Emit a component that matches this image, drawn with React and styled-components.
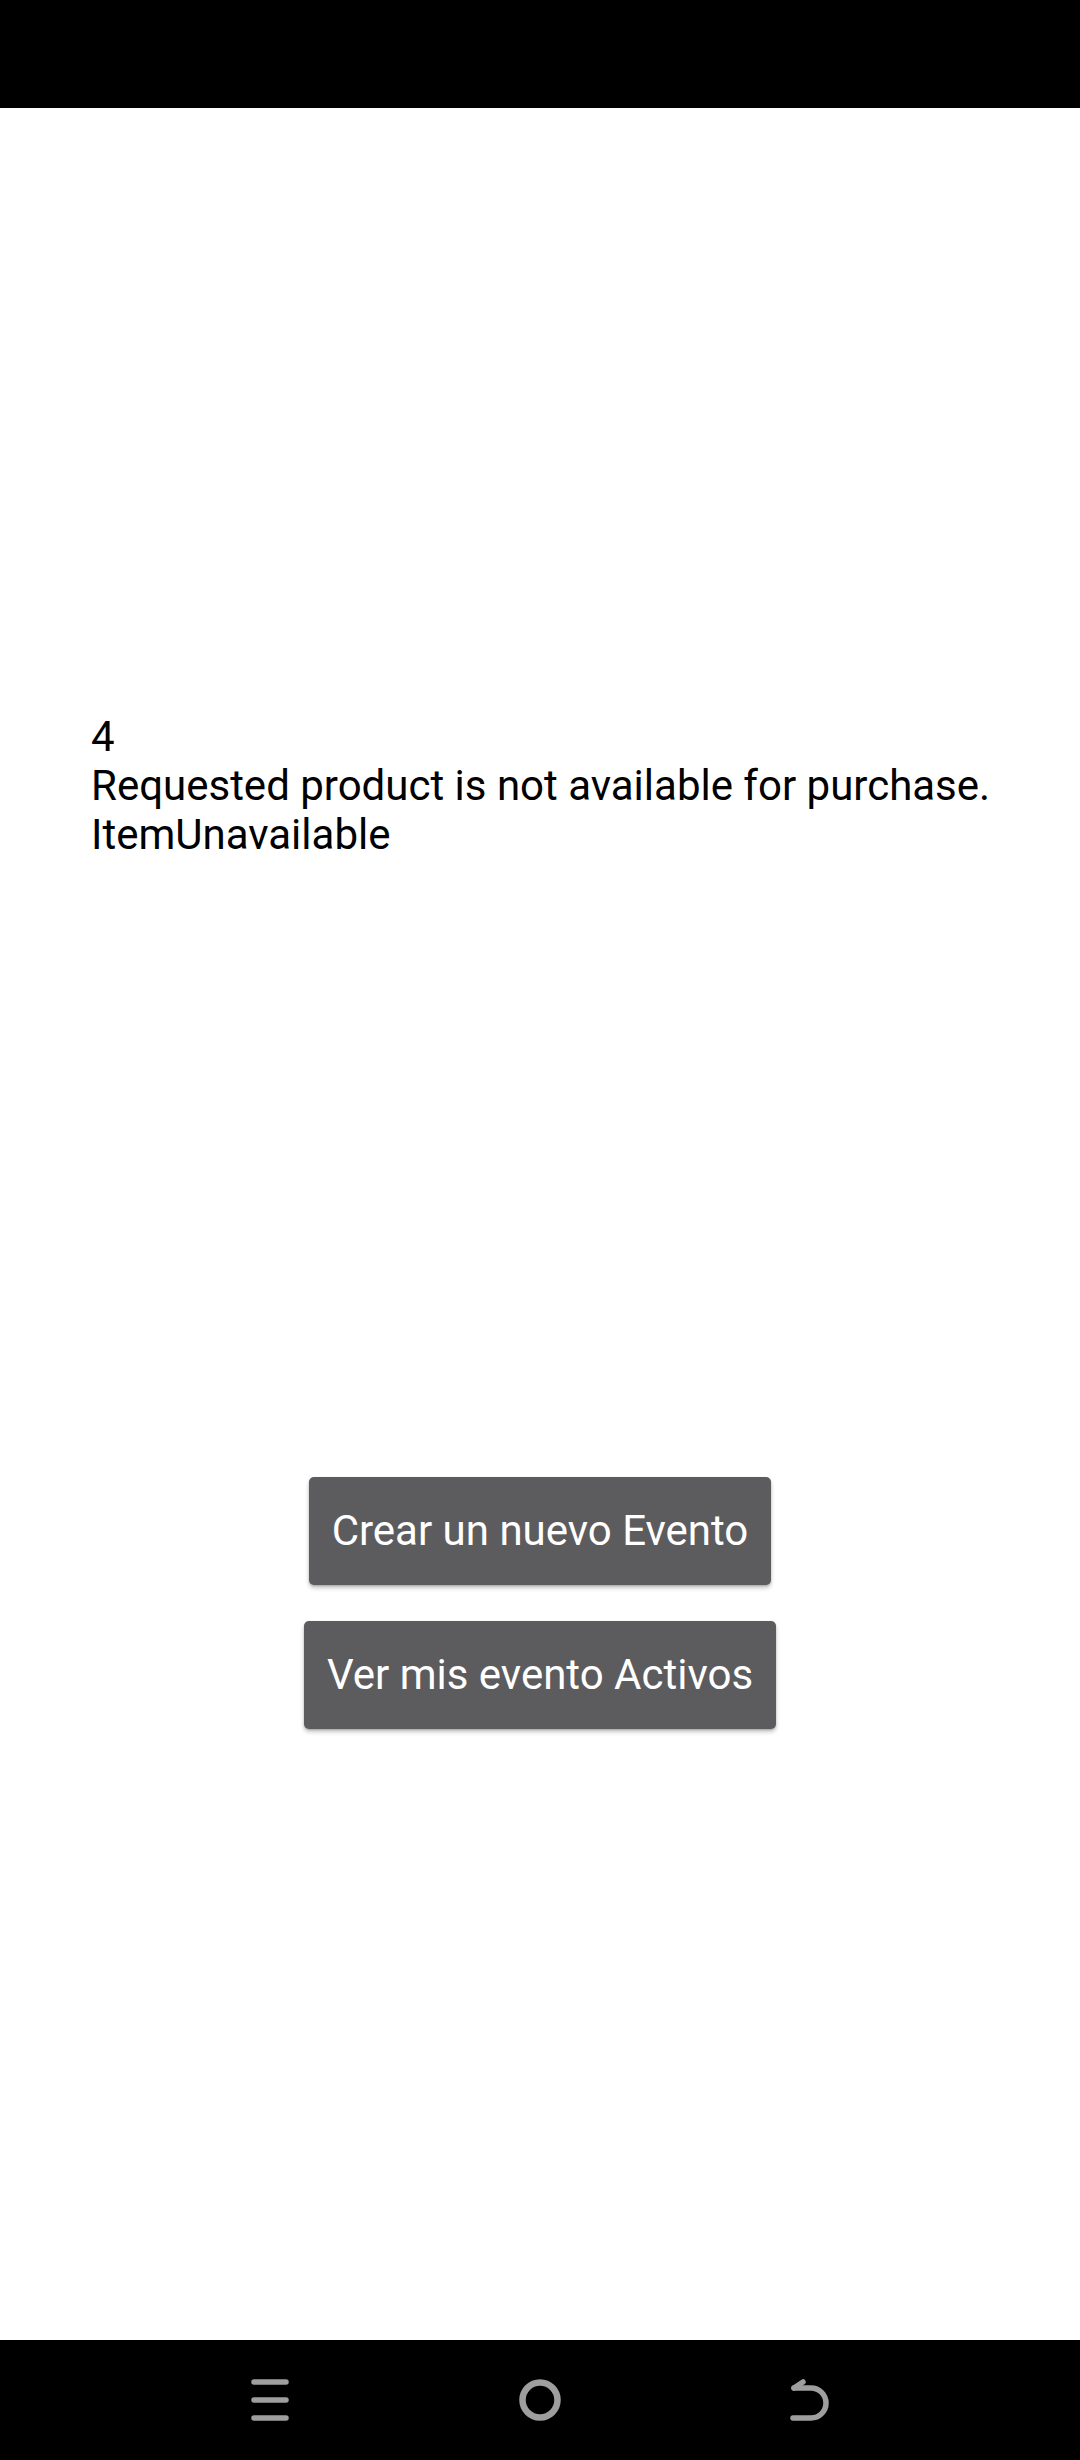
import React from 'react';
import styled, { createGlobalStyle } from 'styled-components';

const GlobalStyle = createGlobalStyle`
  html, body {
    margin: 0;
    padding: 0;
    background: #ffffff;
  }

  body {
    font-family: Roboto, 'Noto Sans', sans-serif;
  }
`;

const Screen = styled.div`
  display: flex;
  flex-direction: column;
  width: 1080px;
  height: 2460px;
  background: #ffffff;
`;

const StatusBar = styled.div`
  height: 108px;
  flex-shrink: 0;
  background: #000000;
`;

const Content = styled.main`
  flex: 1;
  display: flex;
  flex-direction: column;
  padding: 604px 89px 0 91px;
`;

const Message = styled.div`
  display: flex;
  flex-direction: column;
  color: #000000;
  font-size: 42px;
  line-height: 49.2px;
`;

const ButtonStack = styled.div`
  display: flex;
  flex-direction: column;
  align-items: center;
  gap: 36px;
  margin-top: 617px;
  margin-left: -2px;
`;

const ActionButton = styled.button`
  height: 108px;
  padding: 0 23px;
  border: none;
  border-radius: 5px;
  background: #5c5c5e;
  color: #ffffff;
  font-family: Roboto, sans-serif;
  font-size: 42px;
  line-height: 1;
  box-shadow: 0 3px 4px rgba(0, 0, 0, 0.22), 0 1px 2px rgba(0, 0, 0, 0.18);
  cursor: pointer;
`;

const NavBar = styled.nav`
  height: 120px;
  flex-shrink: 0;
  display: flex;
  justify-content: center;
  align-items: center;
  background: #000000;
`;

const NavSlot = styled.div`
  width: 270px;
  display: flex;
  justify-content: center;
  align-items: center;
`;

const iconColor = '#9e9e9e';

const MenuIcon = () => (
  <svg width="38" height="42" viewBox="0 0 38 42" fill="none" stroke={iconColor} strokeWidth="5.5" strokeLinecap="round">
    <path d="M3 3H35M3 21H35M3 39H35" />
  </svg>
);

const HomeIcon = () => (
  <svg width="42" height="42" viewBox="0 0 42 42" fill="none" stroke={iconColor} strokeWidth="6.5">
    <circle cx="21" cy="21" r="17.5" />
  </svg>
);

const BackIcon = () => (
  <svg width="40" height="42" viewBox="0 0 40 42" fill="none" stroke={iconColor} strokeWidth="5.5" strokeLinecap="round" strokeLinejoin="round">
    <path d="M3 39H21A15 15 0 0 0 21 9H4" />
    <path d="M4 9L13 3" />
  </svg>
);

const App = () => {
  const lines = ['4', 'Requested product is not available for purchase.', 'ItemUnavailable'];

  return (
    <>
      <GlobalStyle />
      <Screen>
        <StatusBar />

        <Content>
          <Message>
            {lines.map((line, i) => (
              <span key={i}>{line}</span>
            ))}
          </Message>

          <ButtonStack>
            <ActionButton>Crear un nuevo Evento</ActionButton>
            <ActionButton>Ver mis evento Activos</ActionButton>
          </ButtonStack>
        </Content>

        <NavBar>
          <NavSlot>
            <MenuIcon />
          </NavSlot>
          <NavSlot>
            <HomeIcon />
          </NavSlot>
          <NavSlot>
            <BackIcon />
          </NavSlot>
        </NavBar>
      </Screen>
    </>
  );
};

export default App;
